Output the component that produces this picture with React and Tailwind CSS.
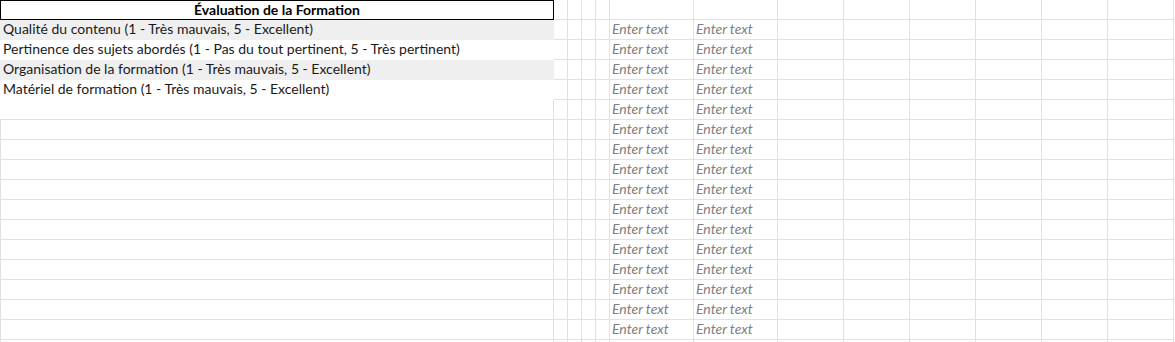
import React from 'react';

const LINE = 'border-[#e1e1e1]';

// column widths including the 1px right grid line
const narrow = [14, 14, 14, 14];
const wide = [84, 84];
const blank = [66, 66, 66, 66, 66, 66];

const labels = [
  'Qualité du contenu (1 - Très mauvais, 5 - Excellent)',
  'Pertinence des sujets abordés (1 - Pas du tout pertinent, 5 - Très pertinent)',
  'Organisation de la formation (1 - Très mauvais, 5 - Excellent)',
  'Matériel de formation (1 - Très mauvais, 5 - Excellent)',
];

function FirstCell({ row }) {
  if (row === 0) {
    return (
      <div className="w-[554px] h-5 shrink-0 border border-black flex items-center justify-center pb-[1px] font-bold text-black">
        Évaluation de la Formation
      </div>
    );
  }
  if (row <= 4) {
    return (
      <div
        className={`w-[554px] h-5 shrink-0 flex items-center pl-[3px] pb-[2px] text-[#1a1a1a] ${
          row % 2 === 1 ? 'bg-[#efefef]' : 'bg-white'
        }`}
      >
        {labels[row - 1]}
      </div>
    );
  }
  if (row === 5) {
    return <div className={`w-[554px] h-5 shrink-0 border-r border-b ${LINE}`} />;
  }
  return <div className={`w-[554px] h-5 shrink-0 border-l border-r border-b ${LINE}`} />;
}

function Row({ row }) {
  const filled = row >= 1 && row <= 16;
  return (
    <div className="flex h-5">
      <FirstCell row={row} />
      {narrow.map((w, i) => (
        <div key={`n${i}`} className={`w-[14px] h-5 shrink-0 border-r border-b ${LINE}`} />
      ))}
      {wide.map((w, i) => (
        <div
          key={`w${i}`}
          className={`w-[84px] h-5 shrink-0 border-r border-b ${LINE} flex items-center pl-[2px] pb-[2px] italic text-[#808080]`}
        >
          {filled ? 'Enter text' : ''}
        </div>
      ))}
      {blank.map((w, i) => (
        <div key={`b${i}`} className={`w-[66px] h-5 shrink-0 border-r border-b ${LINE}`} />
      ))}
    </div>
  );
}

export default function App() {
  const rows = Array.from({ length: 18 }, (_, i) => i);
  return (
    <div className="w-[1175px] h-[342px] overflow-hidden bg-white font-['Lato',sans-serif] text-[14px] leading-none">
      {rows.map((r) => (
        <Row key={r} row={r} />
      ))}
    </div>
  );
}
